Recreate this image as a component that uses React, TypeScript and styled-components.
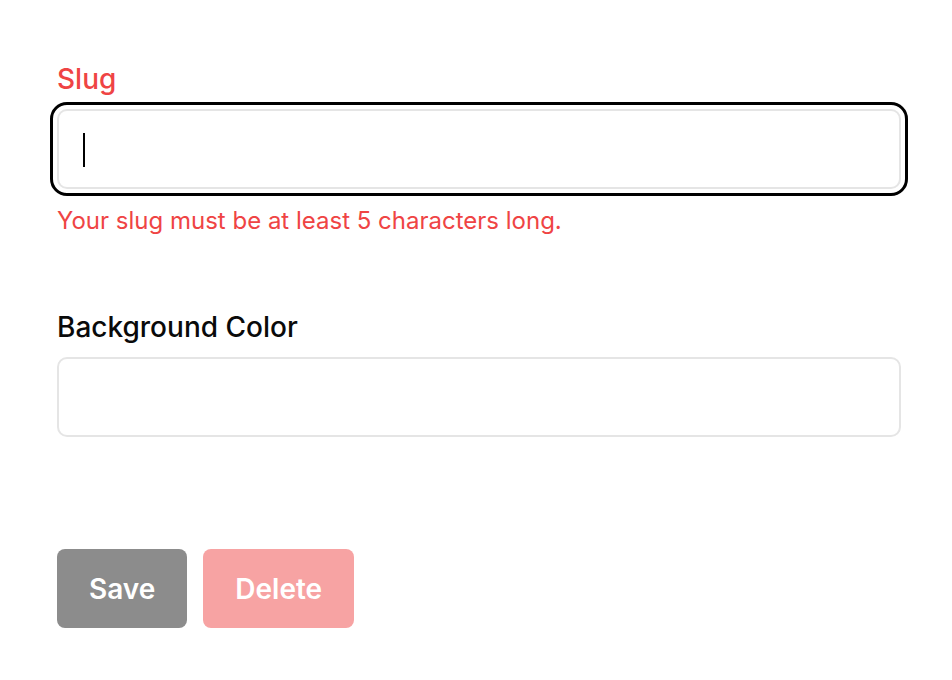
import React from "react";
import styled, { createGlobalStyle } from "styled-components";

const Global = createGlobalStyle`
  html, body { margin: 0; padding: 0; background: #ffffff; }
  body { font-family: Inter, "Noto Sans", "Liberation Sans", sans-serif; }
`;

const Page = styled.form`
  display: flex;
  flex-direction: column;
  width: 844px;
  padding: 61px 0 0 57px;
`;

const Group = styled.div<{ $gap?: number }>`
  display: flex;
  flex-direction: column;
  margin-bottom: ${(p) => p.$gap ?? 0}px;
`;

const Label = styled.label<{ $error?: boolean }>`
  font-size: 28px;
  font-weight: 500;
  line-height: 36px;
  color: ${(p) => (p.$error ? "#ef4444" : "#0a0a0a")};
  margin-bottom: 12px;
`;

const Field = styled.div<{ $focused?: boolean }>`
  box-sizing: border-box;
  height: 80px;
  border: 2px solid #e5e5e5;
  border-radius: 10px;
  background: #fff;
  display: flex;
  align-items: center;
  padding-left: 24px;
  ${(p) =>
    p.$focused &&
    `
    outline: 3px solid #000;
    outline-offset: 4px;
  `}
`;

const Caret = styled.span`
  display: block;
  width: 2px;
  height: 34px;
  margin-top: 2px;
  background: #000;
`;

const ErrorText = styled.p`
  margin: 17px 0 0 0;
  font-size: 24px;
  line-height: 30px;
  color: #ef4444;
`;

const Actions = styled.div`
  display: flex;
  gap: 16px;
`;

const Button = styled.button<{ $variant: "save" | "delete" }>`
  box-sizing: border-box;
  height: 79px;
  padding: 0 32px;
  border: none;
  border-radius: 8px;
  font-family: inherit;
  font-size: 28px;
  font-weight: 600;
  color: #fff;
  background: ${(p) => (p.$variant === "save" ? "#8c8c8c" : "#f7a3a3")};
`;

export default function App() {
  return (
    <>
      <Global />
      <Page onSubmit={(e) => e.preventDefault()}>
        <Group $gap={73}>
          <Label $error>Slug</Label>
          <Field $focused>
            <Caret />
          </Field>
          <ErrorText>Your slug must be at least 5 characters long.</ErrorText>
        </Group>
        <Group $gap={112}>
          <Label>Background Color</Label>
          <Field />
        </Group>
        <Actions>
          <Button type="button" $variant="save">Save</Button>
          <Button type="button" $variant="delete">Delete</Button>
        </Actions>
      </Page>
    </>
  );
}
